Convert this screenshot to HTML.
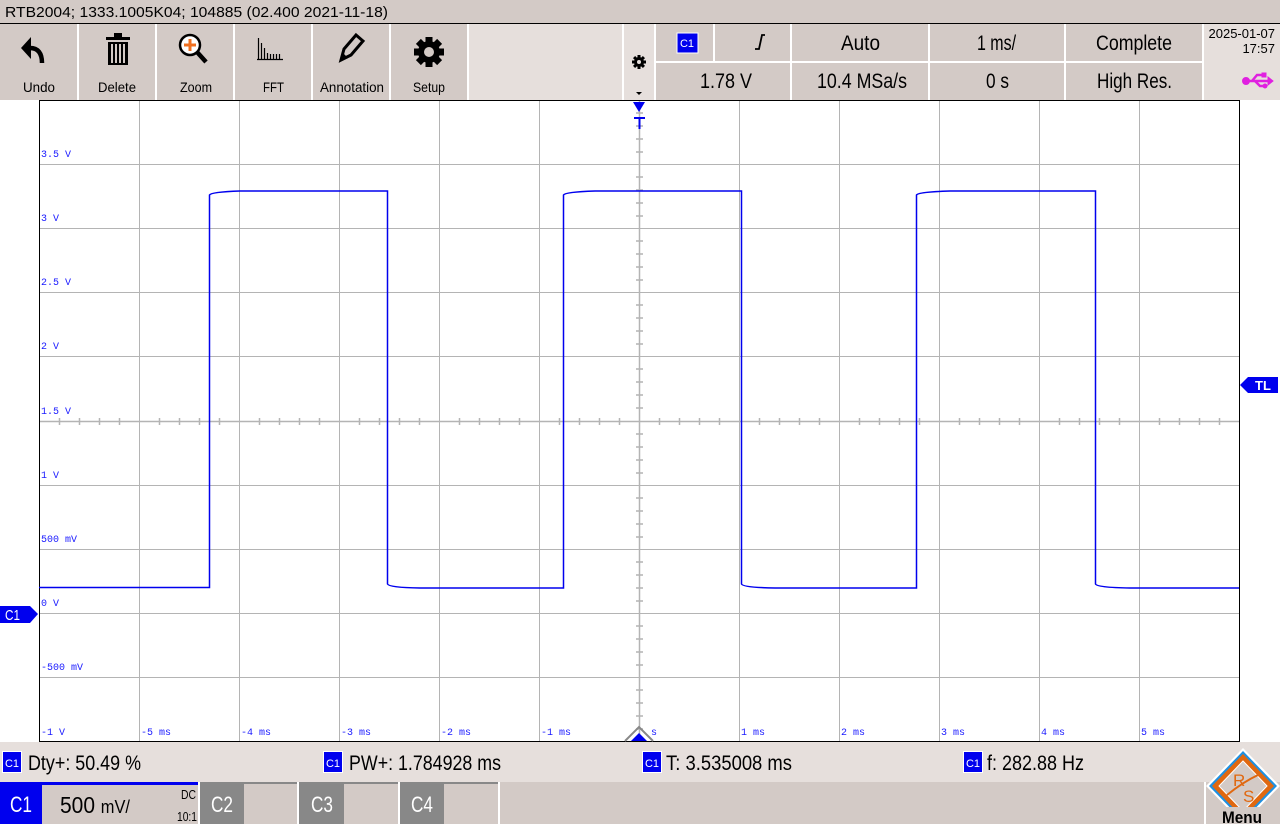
<!DOCTYPE html>
<html><head><meta charset="utf-8"><style>
html,body{margin:0;padding:0;width:1280px;height:824px;overflow:hidden;background:#fff}
svg{display:block}
.n{font-family:"Liberation Sans",sans-serif}
.m{font-family:"Liberation Mono","DejaVu Sans Mono",monospace;font-size:10px;fill:#1a1aff}
</style></head><body>
<svg width="1280" height="824" viewBox="0 0 1280 824" xmlns="http://www.w3.org/2000/svg">
<rect x="0" y="0" width="1280" height="23" fill="#d3cac6"/>
<text x="5" y="17" font-family="Liberation Sans,sans-serif" font-size="15" fill="#000" textLength="383" lengthAdjust="spacingAndGlyphs">RTB2004; 1333.1005K04; 104885 (02.400 2021-11-18)</text>
<rect x="0" y="23" width="1280" height="1" fill="#000"/>
<rect x="0" y="24" width="1280" height="76" fill="#fff"/>
<g fill="#d3cac6">
<rect x="0" y="24" width="77" height="76"/><rect x="79" y="24" width="76" height="76"/>
<rect x="157" y="24" width="76" height="76"/><rect x="235" y="24" width="76" height="76"/>
<rect x="313" y="24" width="76" height="76"/><rect x="391" y="24" width="76" height="76"/>
</g>
<rect x="469" y="24" width="153" height="76" fill="#e6dfdc"/>
<rect x="624" y="24" width="30" height="76" fill="#e6dfdc"/>
<g fill="#d3cac6">
<rect x="656" y="24" width="57" height="37"/><rect x="715" y="24" width="75" height="37"/>
<rect x="792" y="24" width="136" height="37"/><rect x="930" y="24" width="134" height="37"/>
<rect x="1066" y="24" width="136" height="37"/>
<rect x="656" y="63" width="134" height="37"/><rect x="792" y="63" width="136" height="37"/>
<rect x="930" y="63" width="134" height="37"/><rect x="1066" y="63" width="136" height="37"/>
</g>
<rect x="1204" y="24" width="76" height="76" fill="#e6dfdc"/>
<g class="n" font-size="14" fill="#000">
<text x="23" y="92" textLength="32" lengthAdjust="spacingAndGlyphs">Undo</text>
<text x="98" y="92" textLength="38" lengthAdjust="spacingAndGlyphs">Delete</text>
<text x="180" y="92" textLength="32" lengthAdjust="spacingAndGlyphs">Zoom</text>
<text x="263" y="92" textLength="21" lengthAdjust="spacingAndGlyphs">FFT</text>
<text x="320" y="92" textLength="64" lengthAdjust="spacingAndGlyphs">Annotation</text>
<text x="413" y="92" textLength="32" lengthAdjust="spacingAndGlyphs">Setup</text>
</g>
<path d="M30 48 Q42 48 42 63" fill="none" stroke="#000" stroke-width="4.5"/>
<path d="M21 48 L31 37 L31 59 Z" fill="#000"/>
<g fill="#000"><rect x="106" y="37" width="24" height="3"/><rect x="114" y="33" width="8" height="4"/>
<rect x="108" y="42" width="20" height="23"/></g>
<g fill="#d3cac6"><rect x="111" y="44" width="2" height="19"/><rect x="115" y="44" width="2" height="19"/><rect x="119" y="44" width="2" height="19"/><rect x="123" y="44" width="2" height="19"/></g>
<circle cx="190" cy="45" r="10" fill="#fff" stroke="#000" stroke-width="2.5"/>
<path d="M190 39v12M184 45h12" stroke="#f07020" stroke-width="3"/>
<path d="M197 52l9 10" stroke="#000" stroke-width="4.5"/>
<path d="M258.5 38v21M261.5 43v16M264.5 48v11M267.5 53v6M270.5 54v5M273.5 54v5M276.5 54v5M279.5 54v5M257 59.5h26" stroke="#000" stroke-width="1.2"/>
<path d="M341 60 L344 49 L356 35 L363 41 L351 55 Z" fill="none" stroke="#000" stroke-width="3"/>
<path d="M340 61l3-8 5 5z" fill="#000"/>
<g transform="translate(429,52)"><circle r="11" fill="#000"/>
<g fill="#000"><rect x="-3.5" y="-15" width="7" height="30"/><rect x="-15" y="-3.5" width="30" height="7"/>
<rect x="-3.5" y="-15" width="7" height="30" transform="rotate(45)"/><rect x="-3.5" y="-15" width="7" height="30" transform="rotate(-45)"/></g><circle r="5" fill="#d3cac6"/></g>
<g transform="translate(639,62)"><circle r="5" fill="#000"/><g fill="#000"><rect x="-1.5" y="-7" width="3" height="14"/><rect x="-7" y="-1.5" width="14" height="3"/><rect x="-1.5" y="-7" width="3" height="14" transform="rotate(45)"/><rect x="-1.5" y="-7" width="3" height="14" transform="rotate(-45)"/></g><circle r="2" fill="#e6dfdc"/></g>
<path d="M636 92h6l-3 3z" fill="#000"/>
<rect x="677" y="33" width="21" height="20" fill="#0000ee" stroke="#fff"/>
<text x="687" y="47" class="n" font-size="11" fill="#fff" text-anchor="middle">C1</text>
<path d="M755 49h4l3-14h3" fill="none" stroke="#000" stroke-width="1.8"/>
<g class="n" font-size="21" fill="#000">
<text x="841" y="50" textLength="39" lengthAdjust="spacingAndGlyphs">Auto</text>
<text x="977" y="50" textLength="39" lengthAdjust="spacingAndGlyphs">1 ms/</text>
<text x="1096" y="50" textLength="76" lengthAdjust="spacingAndGlyphs">Complete</text>
<text x="700" y="88" textLength="52" lengthAdjust="spacingAndGlyphs">1.78 V</text>
<text x="817" y="88" textLength="90" lengthAdjust="spacingAndGlyphs">10.4 MSa/s</text>
<text x="986" y="88" textLength="23" lengthAdjust="spacingAndGlyphs">0 s</text>
<text x="1097" y="88" textLength="75" lengthAdjust="spacingAndGlyphs">High Res.</text>
</g>
<g class="n" font-size="13" fill="#000" text-anchor="end"><text x="1275" y="38">2025-01-07</text><text x="1275" y="53">17:57</text></g>
<g fill="#e020e0" stroke="#e020e0"><path d="M1244 81h24" stroke-width="2.5"/><circle cx="1246" cy="81" r="3.5"/><path d="M1252 81l5-6h5M1255 81l5 5h4" fill="none" stroke-width="2.5"/><path d="M1268 77l5 4-5 4z"/><rect x="1262" y="73" width="4" height="4"/><circle cx="1265" cy="86" r="2"/></g>
<rect x="0" y="100" width="1280" height="642" fill="#fff"/>
<g stroke="#b4b4b4" stroke-width="1">
<path d="M139.5 100v642M239.5 100v642M339.5 100v642M439.5 100v642M539.5 100v642M739.5 100v642M839.5 100v642M939.5 100v642M1039.5 100v642M1139.5 100v642"/>
<path d="M39 164.5h1200M39 228.5h1200M39 292.5h1200M39 356.5h1200M39 485.5h1200M39 549.5h1200M39 613.5h1200M39 677.5h1200"/>
<path d="M639.5 100v642M39 421.5h1200" stroke-width="1.5"/>
</g>
<g stroke="#b4b4b4" stroke-width="1.5">
<path d="M59.5 418v7M79.5 418v7M99.5 418v7M119.5 418v7M159.5 418v7M179.5 418v7M199.5 418v7M219.5 418v7M259.5 418v7M279.5 418v7M299.5 418v7M319.5 418v7M359.5 418v7M379.5 418v7M399.5 418v7M419.5 418v7M459.5 418v7M479.5 418v7M499.5 418v7M519.5 418v7M559.5 418v7M579.5 418v7M599.5 418v7M619.5 418v7M659.5 418v7M679.5 418v7M699.5 418v7M719.5 418v7M759.5 418v7M779.5 418v7M799.5 418v7M819.5 418v7M859.5 418v7M879.5 418v7M899.5 418v7M919.5 418v7M959.5 418v7M979.5 418v7M999.5 418v7M1019.5 418v7M1059.5 418v7M1079.5 418v7M1099.5 418v7M1119.5 418v7M1159.5 418v7M1179.5 418v7M1199.5 418v7M1219.5 418v7"/>
<path d="M636 113h7M636 126h7M636 139h7M636 152h7M636 177h7M636 190h7M636 203h7M636 216h7M636 241h7M636 254h7M636 267h7M636 280h7M636 305h7M636 318h7M636 331h7M636 344h7M636 369h7M636 382h7M636 395h7M636 408h7M636 434h7M636 447h7M636 460h7M636 473h7M636 498h7M636 511h7M636 524h7M636 537h7M636 562h7M636 575h7M636 588h7M636 601h7M636 626h7M636 639h7M636 652h7M636 665h7M636 690h7M636 703h7M636 716h7M636 729h7"/>
</g>
<rect x="39.5" y="100.5" width="1200" height="641" fill="none" stroke="#000" stroke-width="1"/>
<g class="m">
<text x="41" y="157">3.5 V</text><text x="41" y="221">3 V</text><text x="41" y="285">2.5 V</text>
<text x="41" y="349">2 V</text><text x="41" y="414">1.5 V</text><text x="41" y="478">1 V</text>
<text x="41" y="542">500 mV</text><text x="41" y="606">0 V</text><text x="41" y="670">-500 mV</text>
<text x="41" y="735">-1 V</text>
<text x="141" y="735">-5 ms</text><text x="241" y="735">-4 ms</text><text x="341" y="735">-3 ms</text>
<text x="441" y="735">-2 ms</text><text x="541" y="735">-1 ms</text><text x="651" y="735">s</text>
<text x="741" y="735">1 ms</text><text x="841" y="735">2 ms</text><text x="941" y="735">3 ms</text>
<text x="1041" y="735">4 ms</text><text x="1141" y="735">5 ms</text>
</g>
<path d="M39 587.5 H209.5 V195 Q211 192 240 191 H387.5 V584 Q389 587.5 420 588 H563.5 V195 Q565 192 595 191 H741.5 V584 Q743 587.5 775 588 H916.5 V195 Q918 192 950 191 H1095.5 V584 Q1097 587.5 1130 588 H1239" fill="none" stroke="#0000ee" stroke-width="1.5"/>
<path d="M633 102h12l-6 10z" fill="#0000ee"/>
<path d="M634 117h11v2h-4.5v10h-2v-10h-4.5z" fill="#0000ee"/>
<path d="M625 741 L639 727 L653 741" fill="none" stroke="#888" stroke-width="2"/>
<path d="M631 741 L639 733 L647 741z" fill="#0000ee"/>
<path d="M1240 385 L1248 377 H1278 V393 H1248 Z" fill="#0000ee"/>
<text x="1263" y="390" font-family="Liberation Sans,sans-serif" font-weight="bold" font-size="13" fill="#fff" text-anchor="middle">TL</text>
<path d="M0 606 H30 L38 614 L30 623 H0 Z" fill="#0000ee"/>
<text x="5" y="620" class="n" font-size="15" fill="#fff" textLength="15" lengthAdjust="spacingAndGlyphs">C1</text>
<rect x="0" y="742" width="1280" height="40" fill="#e6dfdc"/>
<g class="n">
<rect x="2.5" y="751.5" width="19" height="21" fill="#0000ee" stroke="#fff"/><text x="12" y="767" font-size="11" fill="#fff" text-anchor="middle">C1</text>
<text x="28" y="770" font-size="21" fill="#000" textLength="113" lengthAdjust="spacingAndGlyphs">Dty+: 50.49 %</text>
<rect x="323.5" y="751.5" width="19" height="21" fill="#0000ee" stroke="#fff"/><text x="333" y="767" font-size="11" fill="#fff" text-anchor="middle">C1</text>
<text x="349" y="770" font-size="21" fill="#000" textLength="152" lengthAdjust="spacingAndGlyphs">PW+: 1.784928 ms</text>
<rect x="642.5" y="751.5" width="19" height="21" fill="#0000ee" stroke="#fff"/><text x="652" y="767" font-size="11" fill="#fff" text-anchor="middle">C1</text>
<text x="666" y="770" font-size="21" fill="#000" textLength="126" lengthAdjust="spacingAndGlyphs">T: 3.535008 ms</text>
<rect x="963.5" y="751.5" width="19" height="21" fill="#0000ee" stroke="#fff"/><text x="973" y="767" font-size="11" fill="#fff" text-anchor="middle">C1</text>
<text x="987" y="770" font-size="21" fill="#000" textLength="97" lengthAdjust="spacingAndGlyphs">f: 282.88 Hz</text>
</g>
<rect x="0" y="782" width="1280" height="42" fill="#d3cac6"/>
<rect x="0" y="782" width="198" height="3" fill="#0000ee"/>
<rect x="0" y="785" width="42" height="39" fill="#0000ee"/>
<rect x="198" y="782" width="2" height="42" fill="#fff"/>
<rect x="200" y="782" width="97" height="2" fill="#888"/><rect x="200" y="784" width="44" height="40" fill="#888"/>
<rect x="297" y="782" width="2" height="42" fill="#fff"/>
<rect x="299" y="782" width="99" height="2" fill="#888"/><rect x="299" y="784" width="45" height="40" fill="#888"/>
<rect x="398" y="782" width="2" height="42" fill="#fff"/>
<rect x="400" y="782" width="98" height="2" fill="#888"/><rect x="400" y="784" width="44" height="40" fill="#888"/>
<rect x="498" y="782" width="2" height="42" fill="#fff"/>
<g class="n" fill="#fff" font-size="22">
<text x="10" y="812" textLength="22" lengthAdjust="spacingAndGlyphs">C1</text>
<text x="211" y="812" textLength="22" lengthAdjust="spacingAndGlyphs">C2</text>
<text x="311" y="812" textLength="22" lengthAdjust="spacingAndGlyphs">C3</text>
<text x="411" y="812" textLength="22" lengthAdjust="spacingAndGlyphs">C4</text>
</g>
<text x="60" y="813" class="n" font-size="23" fill="#000" textLength="70" lengthAdjust="spacingAndGlyphs">500 <tspan font-size="18">mV/</tspan></text>
<text x="181" y="799" class="n" font-size="13" fill="#000" textLength="15" lengthAdjust="spacingAndGlyphs">DC</text>
<text x="177" y="821" class="n" font-size="13" fill="#000" textLength="20" lengthAdjust="spacingAndGlyphs">10:1</text>
<rect x="1204" y="782" width="2" height="42" fill="#fff"/>
<path d="M1243 748 L1280 786 L1243 824 L1206 786 Z" fill="#fff"/>
<path d="M1243 751 L1277 786 L1243 821 L1209 786 Z" fill="#2090e0"/>
<path d="M1243 754 L1274 786 L1243 818 L1212 786 Z" fill="#e06810"/>
<path d="M1243 761 L1267 786 L1243 811 L1219 786 Z" fill="#d3cac6" stroke="#fff" stroke-width="1"/>
<text x="1233" y="786" font-family="Liberation Sans,sans-serif" font-size="17" fill="#e06810">R</text>
<text x="1243" y="802" font-family="Liberation Sans,sans-serif" font-size="17" fill="#e06810">S</text>
<path d="M1227 795 Q1243 782 1258 775" stroke="#e06810" stroke-width="2" fill="none"/>
<rect x="1216" y="807" width="54" height="17" fill="#d3cac6"/>
<text x="1222" y="823" class="n" font-size="17" font-weight="bold" fill="#000" textLength="40" lengthAdjust="spacingAndGlyphs">Menu</text>
</svg>
</body></html>
